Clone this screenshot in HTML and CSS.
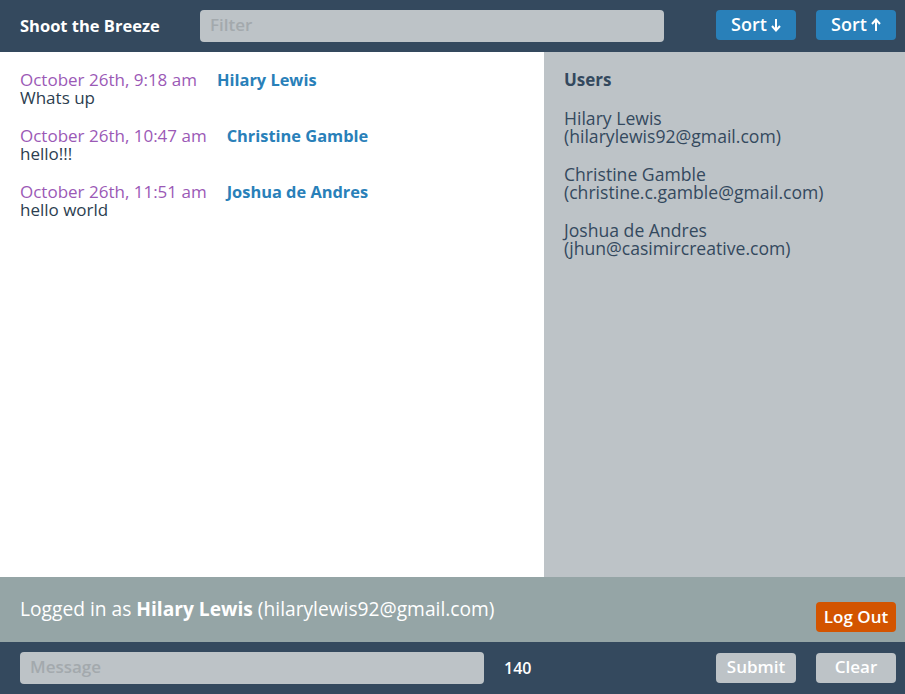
FILE: index.html
```html
<!DOCTYPE html>
<html>
<head>
<meta charset="utf-8">
<title>Shoot the Breeze</title>
<link rel="stylesheet" href="styles.css">
</head>
<body>
<div class="app">
  <header class="topbar">
    <h1 class="title">Shoot the Breeze</h1>
    <input class="field filter" type="text" placeholder="Filter">
    <div class="sorts">
      <button class="btn btn-blue">Sort <svg class="arrow" width="10" height="14" viewBox="0 0 10 14"><path d="M5 1v11M1 8l4 4.5L9 8" fill="none" stroke="#fff" stroke-width="2"/></svg></button>
      <button class="btn btn-blue">Sort <svg class="arrow" width="10" height="14" viewBox="0 0 10 14"><path d="M5 13V2M1 6l4-4.5L9 6" fill="none" stroke="#fff" stroke-width="2"/></svg></button>
    </div>
  </header>
  <main class="main">
    <section class="messages">
      <div class="msg">
        <div class="meta"><span class="date">October 26th, 9:18 am</span><span class="author">Hilary Lewis</span></div>
        <div class="text">Whats up</div>
      </div>
      <div class="msg">
        <div class="meta"><span class="date">October 26th, 10:47 am</span><span class="author">Christine Gamble</span></div>
        <div class="text">hello!!!</div>
      </div>
      <div class="msg">
        <div class="meta"><span class="date">October 26th, 11:51 am</span><span class="author">Joshua de Andres</span></div>
        <div class="text">hello world</div>
      </div>
    </section>
    <aside class="users">
      <h2 class="users-title">Users</h2>
      <div class="user">Hilary Lewis<br>(hilarylewis92@gmail.com)</div>
      <div class="user">Christine Gamble<br>(christine.c.gamble@gmail.com)</div>
      <div class="user">Joshua de Andres<br>(jhun@casimircreative.com)</div>
    </aside>
  </main>
  <div class="status">
    <p class="logged">Logged in as <strong>Hilary Lewis</strong> (hilarylewis92@gmail.com)</p>
    <button class="btn btn-orange">Log Out</button>
  </div>
  <footer class="composer">
    <input class="field message" type="text" placeholder="Message">
    <span class="count">140</span>
    <div class="actions">
      <button class="btn btn-grey">Submit</button>
      <button class="btn btn-grey">Clear</button>
    </div>
  </footer>
</div>
</body>
</html>
```
FILE: styles.css
```css
* { box-sizing: border-box; }
html, body { margin: 0; padding: 0; }
body {
  font-family: "Open Sans", "Noto Sans", sans-serif;
  color: #34495e;
  background: #fff;
}
.app {
  display: flex;
  flex-direction: column;
  width: 905px;
  height: 694px;
}
.topbar {
  height: 52px;
  background: #34495e;
  display: flex;
  align-items: center;
  padding: 0 9px 0 20px;
}
.title {
  margin: 0 0 2px;
  width: 180px;
  font-size: 16.5px;
  font-weight: 700;
  color: #fff;
}
.field {
  height: 32px;
  border: none;
  border-radius: 4px;
  background: #bdc3c7;
  font-family: inherit;
  font-size: 17px;
  padding: 0 10px 3px;
  color: #34495e;
  outline: none;
}
.field::placeholder { color: #a3a9ad; font-weight: 600; }
.filter { width: 464px; }
.sorts {
  margin-left: auto;
  display: flex;
  gap: 20px;
  margin-bottom: 2px;
}
.btn {
  width: 80px;
  height: 30px;
  border: none;
  border-radius: 4px;
  font-family: inherit;
  font-size: 17px;
  font-weight: 600;
  color: #fff;
  padding: 0 0 2px;
  cursor: pointer;
  display: inline-flex;
  align-items: center;
  justify-content: center;
  gap: 4px;
}
.sorts .btn { font-size: 18px; }
.arrow { display: block; margin-top: 1px; }
.btn-blue { background: #2980b9; }
.btn-orange { background: #d35400; }
.btn-grey { background: #bdc3c7; }
.main {
  flex: 1;
  display: flex;
  min-height: 0;
}
.messages {
  width: 544px;
  background: #fff;
  padding: 19px 20px;
}
.msg { margin-bottom: 20px; font-size: 17px; line-height: 18px; }
.date { color: #9b59b6; }
.author { color: #2980b9; font-weight: 700; font-size: 16.4px; margin-left: 20px; }
.text { color: #2c3e50; }
.users {
  flex: 1;
  background: #bdc3c7;
  padding: 19px 20px;
  font-size: 17.6px;
  line-height: 18px;
}
.users-title {
  margin: 0 0 20px;
  font-size: 17px;
  line-height: 18px;
  font-weight: 700;
}
.user { margin-bottom: 20px; }
.status {
  height: 65px;
  background: #95a5a6;
  display: flex;
  align-items: flex-start;
  padding: 0 9px 0 20px;
}
.logged {
  margin: 20px 0 0;
  color: #fff;
  font-size: 19.2px;
  line-height: 24px;
}
.btn-orange { margin-left: auto; margin-top: 25px; }
.composer {
  height: 52px;
  background: #34495e;
  display: flex;
  align-items: center;
  padding: 0 9px 1px 20px;
}
.message { width: 464px; }
.count {
  margin-left: 20px;
  color: #fff;
  font-weight: 600;
  font-size: 16px;
}
.actions {
  margin-left: auto;
  display: flex;
  gap: 20px;
}
```
